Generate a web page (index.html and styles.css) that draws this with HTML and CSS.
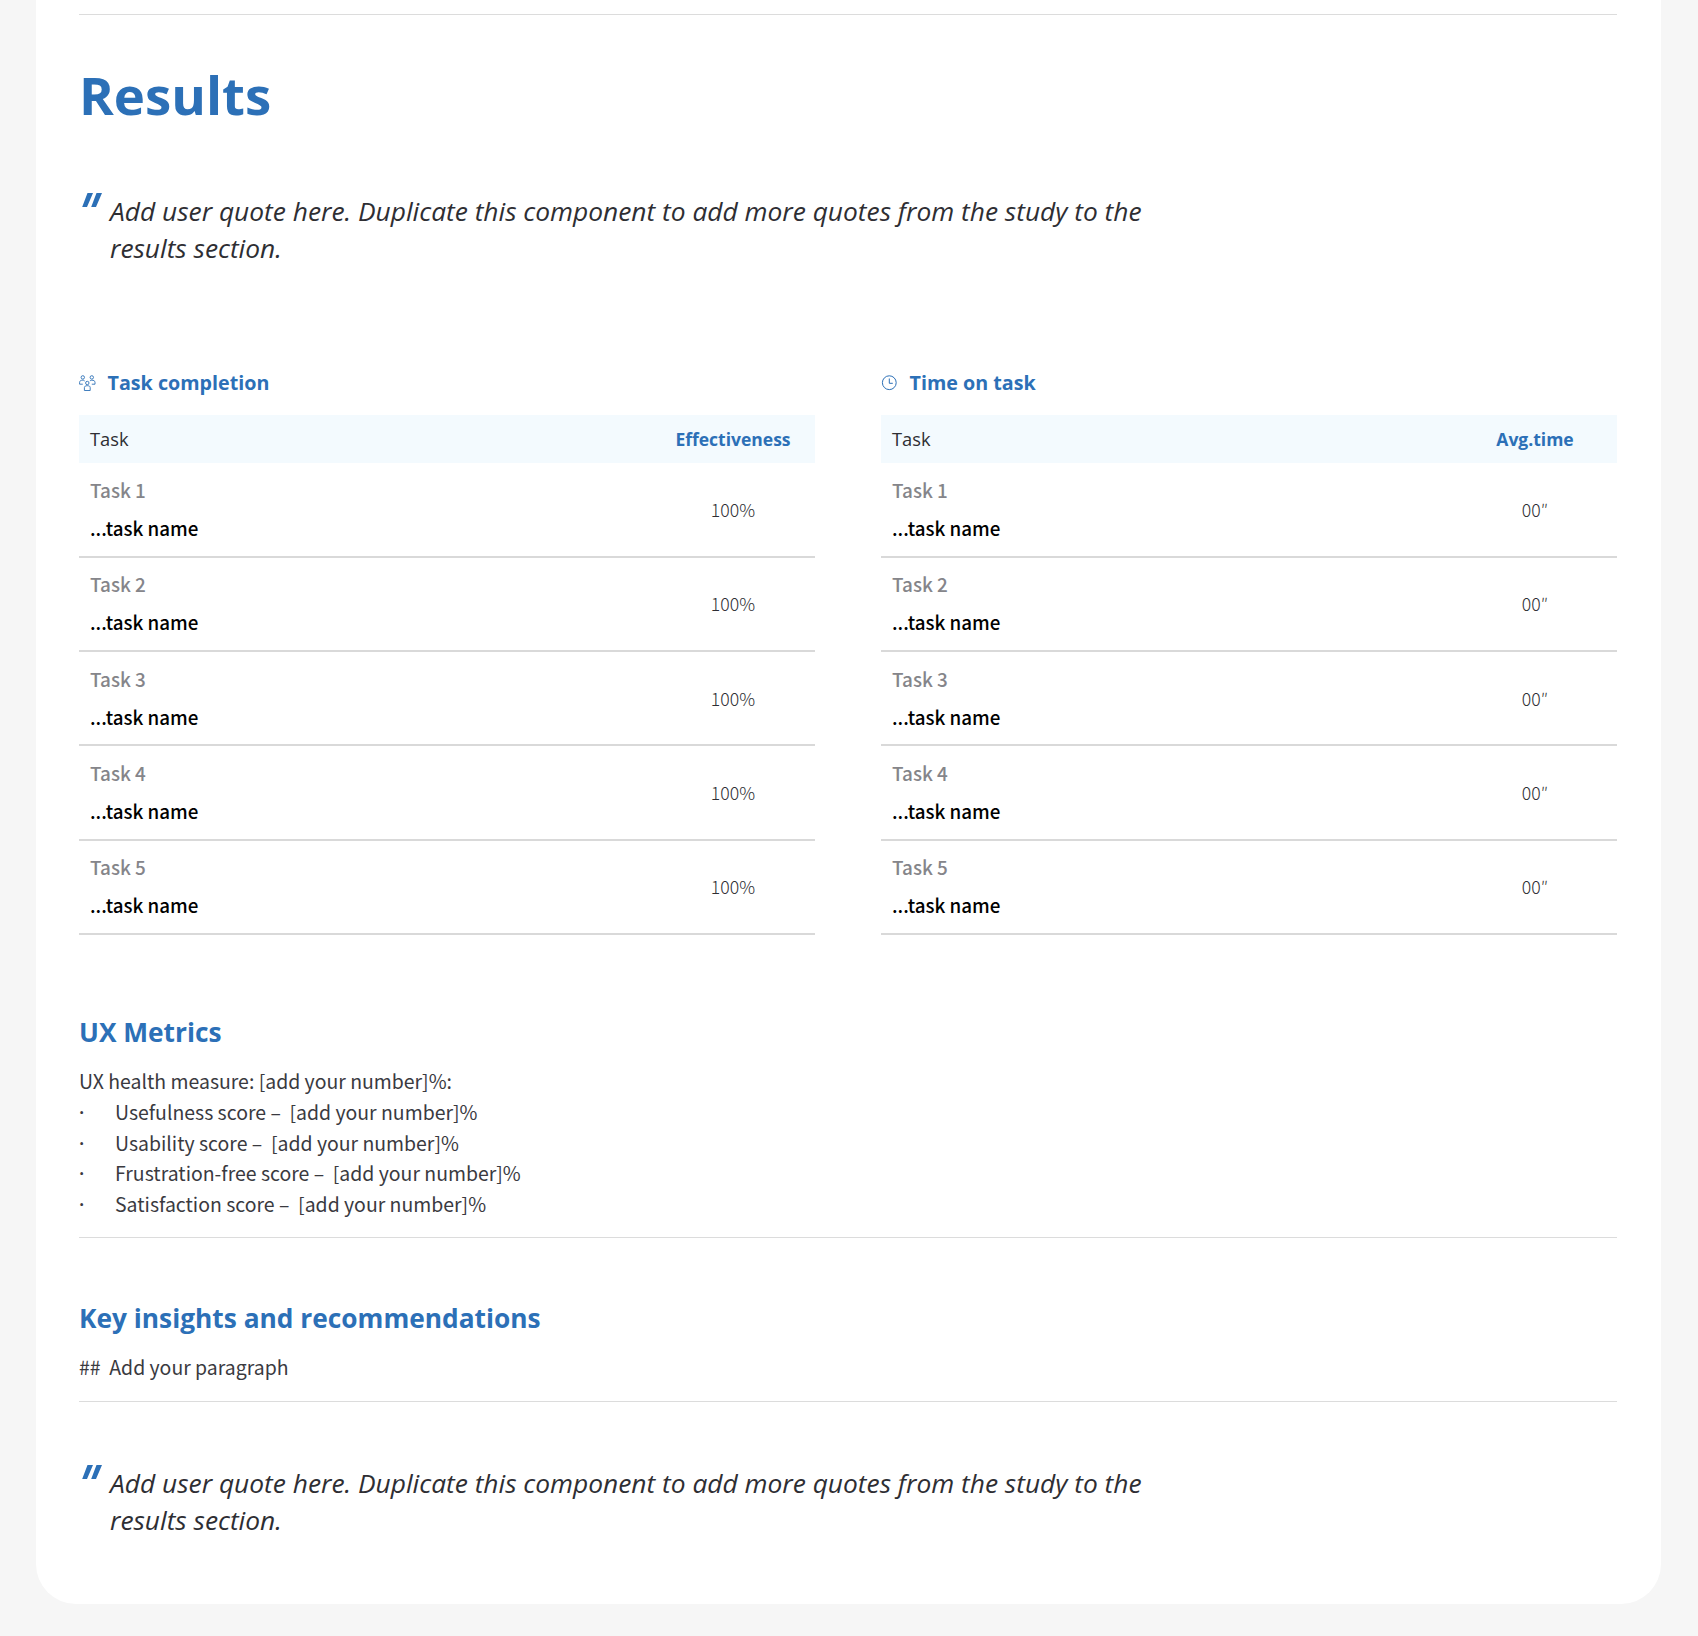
FILE: index.html
```html
<!DOCTYPE html>
<html lang="en">
<head>
<meta charset="utf-8">
<title>Results</title>
<link rel="stylesheet" href="styles.css">
</head>
<body>
<main class="card">
  <hr class="rule rule-top">
  <h1 class="title">Results</h1>
  <blockquote class="quote quote-first">
    <svg class="quote-mark" viewBox="0 0 20 14" aria-hidden="true"><path d="M.200 14H5L11 0H5.500ZM9.200 14H14L20 0H14.500Z"/></svg>
    <p class="quote-text">Add user quote here. Duplicate this component to add more quotes from the study to the results section.</p>
  </blockquote>
  <section class="tables">
    <div class="table-block">
      <h3 class="table-title">
        <svg class="icon" viewBox="0 0 17 16" fill="none" stroke="currentColor" stroke-width=".9"><circle cx="3.800" cy="2.400" r="1.700"/><circle cx="12.800" cy="2.400" r="1.700"/><circle cx="8.300" cy="8" r="1.700"/><path d="M5.700 6C5 5.300 4.500 5.200 3.800 5.200 2 5.200.6 5.800.6 7.300V9.200H3.800"/><path d="M10.900 6C11.600 5.300 12.100 5.200 12.800 5.200 14.600 5.200 16 5.800 16 7.300V9.200H12.800"/><path d="M5.400 15.500V12.600C5.400 11.300 6.500 10.700 8.300 10.700S11.200 11.300 11.200 12.600V15.500Z"/></svg>
        Task completion
      </h3>
      <div class="table-head"><span class="head-task">Task</span><span class="col-head">Effectiveness</span></div>
      <div class="row"><div><div class="task-id">Task 1</div><div class="task-name">...task name</div></div><div class="value">100%</div></div>
      <div class="row"><div><div class="task-id">Task 2</div><div class="task-name">...task name</div></div><div class="value">100%</div></div>
      <div class="row"><div><div class="task-id">Task 3</div><div class="task-name">...task name</div></div><div class="value">100%</div></div>
      <div class="row"><div><div class="task-id">Task 4</div><div class="task-name">...task name</div></div><div class="value">100%</div></div>
      <div class="row"><div><div class="task-id">Task 5</div><div class="task-name">...task name</div></div><div class="value">100%</div></div>
    </div>
    <div class="table-block">
      <h3 class="table-title">
        <svg class="icon" viewBox="0 0 17 16" fill="none" stroke="currentColor" stroke-width="1"><circle cx="8.300" cy="7.700" r="6.900"/><path d="M8.300 3.500V8.300H11.800"/></svg>
        Time on task
      </h3>
      <div class="table-head"><span class="head-task">Task</span><span class="col-head">Avg.time</span></div>
      <div class="row"><div><div class="task-id">Task 1</div><div class="task-name">...task name</div></div><div class="value">00″</div></div>
      <div class="row"><div><div class="task-id">Task 2</div><div class="task-name">...task name</div></div><div class="value">00″</div></div>
      <div class="row"><div><div class="task-id">Task 3</div><div class="task-name">...task name</div></div><div class="value">00″</div></div>
      <div class="row"><div><div class="task-id">Task 4</div><div class="task-name">...task name</div></div><div class="value">00″</div></div>
      <div class="row"><div><div class="task-id">Task 5</div><div class="task-name">...task name</div></div><div class="value">00″</div></div>
    </div>
  </section>
  <section class="metrics">
    <h2 class="section-title">UX Metrics</h2>
    <p class="body-line">UX health measure: [add your number]%:</p>
    <ul class="score-list">
      <li class="score"><span class="dot">·</span>Usefulness score –&nbsp; [add your number]%</li>
      <li class="score"><span class="dot">·</span>Usability score –&nbsp; [add your number]%</li>
      <li class="score"><span class="dot">·</span>Frustration-free score –&nbsp; [add your number]%</li>
      <li class="score"><span class="dot">·</span>Satisfaction score –&nbsp; [add your number]%</li>
    </ul>
  </section>
  <hr class="rule">
  <section class="insights">
    <h2 class="section-title">Key insights and recommendations</h2>
    <p class="body-line">##&nbsp; Add your paragraph</p>
  </section>
  <hr class="rule">
  <blockquote class="quote quote-last">
    <svg class="quote-mark" viewBox="0 0 20 14" aria-hidden="true"><path d="M.200 14H5L11 0H5.500ZM9.200 14H14L20 0H14.500Z"/></svg>
    <p class="quote-text">Add user quote here. Duplicate this component to add more quotes from the study to the results section.</p>
  </blockquote>
</main>
</body>
</html>
```
FILE: styles.css
```css
* { box-sizing: border-box; }
html, body { margin: 0; padding: 0; }
body {
  width: 1698px;
  height: 1636px;
  background: #f6f6f6;
  padding: 0 36px;
  overflow: hidden;
  font-family: "Noto Sans CJK SC", "Noto Sans", sans-serif;
  color: #2e2e33;
}
.card {
  width: 1625px;
  height: 1604px;
  background: #fff;
  border-radius: 0 0 40px 40px;
  padding: 14px 44px 0 43px;
}
.rule { border: 0; height: 1px; background: #dcdcdc; margin: 0; }
.title {
  margin: 0;
  padding-top: 42px;
  font: 700 52.800px/76px "Open Sans", sans-serif;
  color: #2c70b7;
}
.quote { display: flex; margin: 0; width: 1101px; }
.quote-first { margin-top: 60px; }
.quote-last { margin-top: 63px; }
.quote-mark {
  flex: none;
  width: 20px;
  height: 14px;
  margin: 0 8px 0 3px;
  fill: #2c70b7;
}
.quote-text {
  margin: 0;
  font: italic 400 26.330px/37.400px "Open Sans", sans-serif;
  color: #2e2e33;
}
.tables { display: grid; grid-template-columns: 736px 736px; column-gap: 66px; margin-top: 99px; }
.table-title {
  display: flex;
  align-items: center;
  gap: 11.500px;
  margin: 0;
  height: 32px;
  font: 700 19.700px/32px "Open Sans", sans-serif;
  color: #2c70b7;
}
.icon { width: 17px; height: 16px; flex: none; }
.table-head {
  display: flex;
  justify-content: space-between;
  align-items: center;
  height: 48.600px;
  margin-top: 16px;
  padding: 0 24px 0 11px;
  background: #f3fafe;
  font: 400 17.500px/24px "Open Sans", sans-serif;
  color: #2e2e33;
}
.head-task { font-size: 18.300px; }
.col-head { font-weight: 700; color: #2c70b7; width: 116px; text-align: center; white-space: nowrap; }
.row {
  display: flex;
  justify-content: space-between;
  align-items: center;
  height: 94.300px;
  padding: 0 24px 1px 11px;
  border-bottom: 2px solid #d9d9d9;
}
.task-id { font-size: 18.900px; line-height: 35px; margin-bottom: 2px; font-weight: 500; color: #85858a; }
.task-name { font-size: 18.800px; line-height: 37px; font-weight: 500; color: #000; }
.value { width: 116px; text-align: center; font-size: 17.700px; font-weight: 300; color: #2e2e33; }
.metrics { margin-top: 75px; padding-bottom: 18px; }
.section-title {
  margin: 0 0 12px;
  font: 700 26.300px/44px "Open Sans", sans-serif;
  color: #2c70b7;
}
.body-line { margin: 0; font-size: 19.460px; line-height: 30.500px; color: #3a3a3f; }
.score-list { list-style: none; margin: 1px 0 0; padding: 0; }
.score { display: flex; align-items: baseline; font-size: 19.460px; line-height: 30.500px; color: #3a3a3f; white-space: pre; }
.dot { width: 36px; flex: none; line-height: 1; font-family: "Open Sans", sans-serif; font-weight: 600; }
.insights { margin-top: 58px; padding-bottom: 18px; }
```
